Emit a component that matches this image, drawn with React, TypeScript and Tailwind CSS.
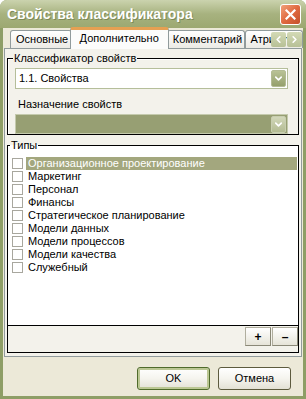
import { ChevronDown, ChevronLeft, ChevronRight } from "lucide-react"

const TYPES = [
  "Организационное проектирование",
  "Маркетинг",
  "Персонал",
  "Финансы",
  "Стратегическое планирование",
  "Модели данных",
  "Модели процессов",
  "Модели качества",
  "Служебный",
]

const TABS = ["Основные", "Дополнительно", "Комментарий", "Атрибуты"]

function ComboArrow({ light = false }: { light?: boolean }) {
  return (
    <div
      className={`w-[15px] h-[17px] rounded-[2px] border flex items-center justify-center ${
        light
          ? "bg-gradient-to-b from-[#D2D8BA] to-[#B3BB92] border-[#C8CEB0]"
          : "bg-gradient-to-b from-[#B9C296] to-[#95A06C] border-[#B3BB94]"
      }`}
    >
      <ChevronDown className="w-[11px] h-[11px] text-white" strokeWidth={3.5} />
    </div>
  )
}

function XpButton({ label, focused = false }: { label: string; focused?: boolean }) {
  return (
    <div
      className={`w-[73px] h-[23px] rounded-[3px] border flex items-center justify-center bg-gradient-to-b from-[#FFFFFF] via-[#F5F4EE] to-[#E3E1D5] ${
        focused
          ? "border-[#4F6B2A] shadow-[inset_0_0_0_2px_#BBC793]"
          : "border-[#5D5B3E]"
      }`}
    >
      {label}
    </div>
  )
}

export default function App() {
  return (
    <div className="w-[306px] h-[399px] flex flex-col bg-[#8E9E66] rounded-t-[7px] overflow-hidden font-['Liberation_Sans',sans-serif] text-[11px] text-black">
      {/* Title bar */}
      <div className="h-[28px] shrink-0 flex items-center pl-[7px] pr-[5px] bg-gradient-to-b from-[#CBD3AE] via-[#A7B27F] to-[#9CA871]">
        <span className="flex-1 text-white font-bold text-[14px] leading-none [text-shadow:1px_1px_0_#7E8A57]">
          Свойства классификатора
        </span>
        <div className="w-[21px] h-[21px] rounded-[3px] border border-white bg-gradient-to-br from-[#F0A07A] via-[#E06A40] to-[#C4502A] flex items-center justify-center">
          <svg width="11" height="11" viewBox="0 0 11 11">
            <path d="M1.5 1.5 L9.5 9.5 M9.5 1.5 L1.5 9.5" stroke="white" strokeWidth="2.2" strokeLinecap="square" />
          </svg>
        </div>
      </div>

      {/* Body */}
      <div className="flex-1 mx-[3px] mb-[3px] bg-[#ECE9D8] flex flex-col pl-[1px]">
        {/* Tab strip */}
        <div className="h-[20px] shrink-0 flex items-end pl-[6px] relative">
          {TABS.map((tab, i) =>
            i === 1 ? (
              <div
                key={tab}
                className="relative z-10 -mx-[2px] h-[22px] -mb-[1px] px-[9px] pt-[3px] bg-[#FCFCFB] border border-b-0 border-[#919B9C] rounded-t-[3px] border-t-[3px] border-t-[#E6A052] leading-none"
              >
                {tab}
              </div>
            ) : (
              <div
                key={tab}
                className="h-[18px] px-[5px] pt-[3px] bg-gradient-to-b from-white to-[#ECEBE5] border border-b-0 border-[#919B9C] rounded-t-[3px] leading-none whitespace-nowrap overflow-hidden"
              >
                {tab}
              </div>
            )
          )}
          <div className="absolute right-[1px] top-[4px] flex gap-[1px] z-20">
            <div className="w-[15px] h-[15px] rounded-[2px] bg-gradient-to-b from-[#D3DAB6] to-[#B7C096] flex items-center justify-center">
              <ChevronLeft className="w-[11px] h-[11px] text-white" strokeWidth={3.5} />
            </div>
            <div className="w-[15px] h-[15px] rounded-[2px] bg-gradient-to-b from-[#D3DAB6] to-[#B7C096] flex items-center justify-center">
              <ChevronRight className="w-[11px] h-[11px] text-white" strokeWidth={3.5} />
            </div>
          </div>
        </div>

        {/* Tab page */}
        <div className="h-[309px] shrink-0 mr-[1px] border border-[#919B9C] bg-[#F3F2EB] px-[2px] pt-[9px] flex flex-col gap-[10px]">
          {/* Классификатор свойств */}
          <div className="relative h-[77px] border border-black shadow-[inset_1px_1px_0_#fff] pl-[7px] pr-[10px] pt-[9px]">
            <span className="absolute -top-[8px] left-[5px] px-[1px] bg-[#F3F2EB] leading-[14px]">
              Классификатор свойств
            </span>
            <div className="h-[21px] bg-white border border-[#B5BE9A] flex items-center pl-[3px] pr-[1px]">
              <span className="flex-1">1.1. Свойства</span>
              <ComboArrow />
            </div>
            <div className="pl-[3px] mt-[8px] mb-[3px] leading-[14px]">Назначение свойств</div>
            <div className="h-[20px] bg-[#979F73] border border-[#C4CAAD] flex items-center justify-end pr-[1px]">
              <ComboArrow light />
            </div>
          </div>

          {/* Типы */}
          <div className="relative flex-1 mb-[3px] border border-black flex flex-col">
            <span className="absolute -top-[8px] left-[2px] px-[1px] leading-[14px] bg-[linear-gradient(to_bottom,#F3F2EB_50%,#fff_50%)]">
              Типы
            </span>
            <div className="flex-1 bg-white border-b border-black pt-[11px] flex flex-col">
              {TYPES.map((t, i) => (
                <div key={t} className="h-[13px] flex items-center pl-[4px] pr-[1px]">
                  <div className="w-[11px] h-[11px] border border-[#A8A79E] bg-white shrink-0" />
                  <div
                    className={`ml-[3px] flex-1 h-[13px] pl-[2px] leading-[13px] ${
                      i === 0 ? "bg-[#A3A77E] text-white" : ""
                    }`}
                  >
                    {t}
                  </div>
                </div>
              ))}
            </div>
            <div className="h-[26px] shrink-0 flex justify-end items-start pt-[1px] gap-[1px]">
              <div className="w-[26px] h-[19px] border border-[#B0AE9E] border-r-[#8A8877] border-b-[#8A8877] bg-gradient-to-b from-white to-[#E6E4D8] flex items-center justify-center font-bold text-[12px] leading-none">
                +
              </div>
              <div className="w-[26px] h-[19px] border border-[#B0AE9E] border-r-[#8A8877] border-b-[#8A8877] bg-gradient-to-b from-white to-[#E6E4D8] flex items-center justify-center font-bold text-[12px] leading-none">
                –
              </div>
            </div>
          </div>
        </div>

        {/* Dialog buttons */}
        <div className="flex-1 flex justify-end items-start pt-[10px] pr-[12px] gap-[8px]">
          <XpButton label="OK" focused />
          <XpButton label="Отмена" />
        </div>
      </div>
    </div>
  )
}
